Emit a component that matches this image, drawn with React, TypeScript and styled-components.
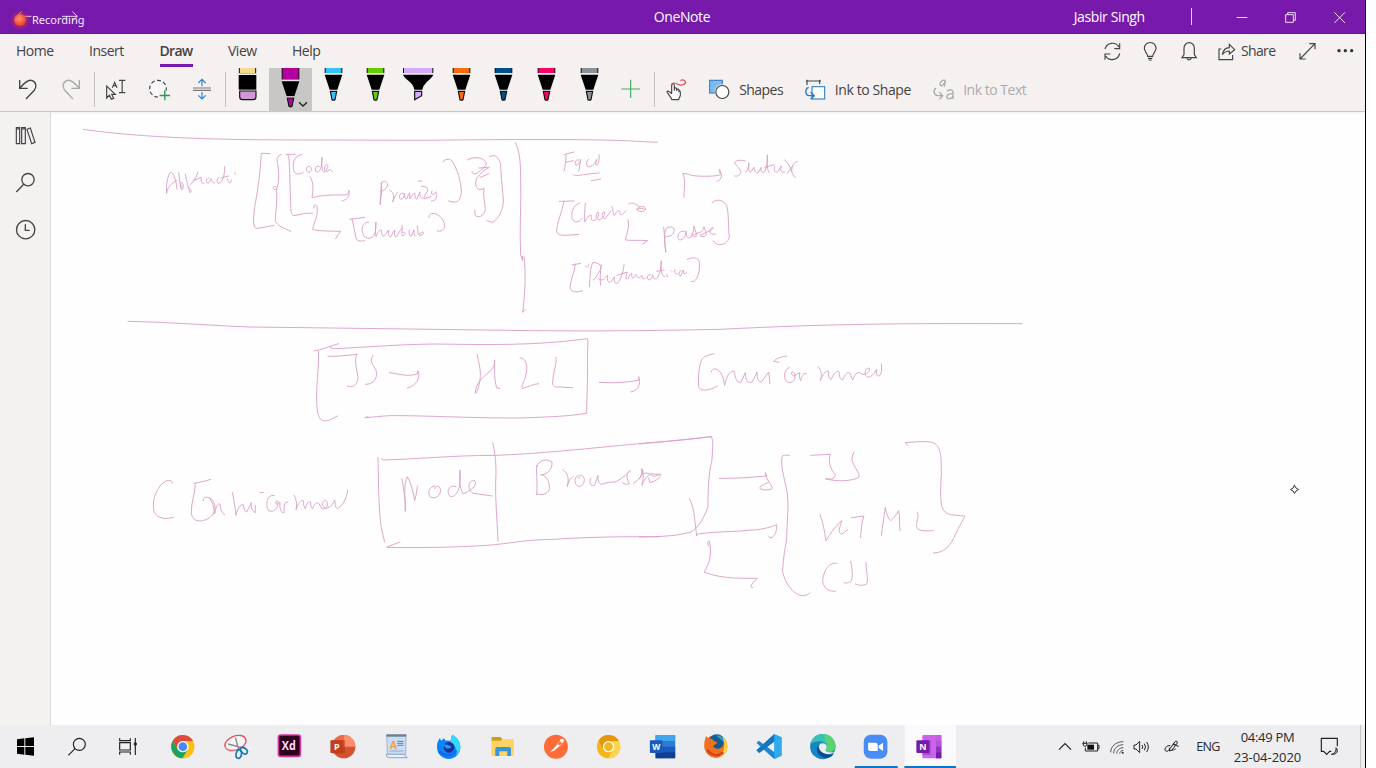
import React from "react";
import styled, { createGlobalStyle } from "styled-components";

const GlobalStyle = createGlobalStyle`
  * { box-sizing: border-box; }
  body { margin: 0; background: #fff; overflow: hidden; }
`;

const Screen = styled.div`
  width: 1366px;
  height: 768px;
  display: flex;
  flex-direction: column;
  border-right: 1px solid #000;
  background: #fff;
  color: #454242;
  font: 14px/18px "Open Sans", "Noto Sans", sans-serif;
`;

/* ---------- title bar ---------- */

const TitleBar = styled.header`
  position: relative;
  height: 34px;
  flex: none;
  display: grid;
  grid-template-columns: 1fr auto 1fr;
  align-items: center;
  background: #7719aa;
  border-bottom: 1px solid #6b0f9f;
  color: #fff;
`;

const NavArrows = styled.svg`
  width: 90px;
  height: 33px;
  display: block;
`;

const AppName = styled.span`
  letter-spacing: -0.4px;
  margin-right: 1px;
`;

const TitleRight = styled.div`
  display: flex;
  justify-content: flex-end;
  align-items: center;
`;

const UserName = styled.span`
  width: 117px;
  letter-spacing: -0.38px;
  white-space: nowrap;
`;

const TitleDivider = styled.span`
  width: 1px;
  height: 17px;
  background: #e7c9f5;
  margin-right: 25px;
`;

const RecordingBadge = styled.div`
  position: absolute;
  left: 12px;
  top: 11px;
  display: flex;
  align-items: center;
  gap: 4px;
  font: 11px/18px "Noto Sans", "Open Sans", sans-serif;
  color: #f6eafa;
`;

const RecordDot = styled.span`
  width: 12px;
  height: 12px;
  margin: 0 2px;
  border-radius: 50%;
  background: radial-gradient(circle at 45% 40%, #ff9a7c, #f4492f 60%, #cf3a35);
  box-shadow: 0 0 4px 1px #c2304e;
`;

/* ---------- ribbon ---------- */

const Ribbon = styled.div`
  height: 78px;
  flex: none;
  background: #f5f1f1;
  border-bottom: 1px solid #c9c6c6;
`;

const TabRow = styled.nav`
  height: 34px;
  display: flex;
  align-items: stretch;
  padding-left: 16px;
`;

const Tab = styled.span<{ $w: number; $active?: boolean }>`
  width: ${(p) => p.$w}px;
  line-height: 34px;
  letter-spacing: ${(p) => (p.$active ? "-0.7px" : "-0.5px")};
  font-weight: ${(p) => (p.$active ? 600 : 400)};

  span {
    display: inline-block;
    height: 33px;
    min-width: 33px;
    border-bottom: ${(p) => (p.$active ? "3px solid #7719aa" : "none")};
  }
`;

const TabActions = styled.div`
  margin-left: auto;
  display: flex;
`;

const ShareLabel = styled.span`
  width: 45px;
  line-height: 34px;
  letter-spacing: -0.65px;
`;

const ToolRow = styled.div`
  height: 43px;
  display: flex;
  align-items: stretch;
`;

const Separator = styled.i`
  width: 1px;
  height: 35px;
  margin: 4px 0;
  background: #c4c0c0;
`;

const Pens = styled.div`
  display: flex;
  margin-left: 0.4px;
`;

const PenSlot = styled.div<{ $active?: boolean }>`
  width: 42.65px;
  height: 43px;
  background: ${(p) => (p.$active ? "#c9c6c6" : "transparent")};
`;

const ToolLabel = styled.span<{ $w: number; $disabled?: boolean; $ls?: number }>`
  width: ${(p) => p.$w}px;
  line-height: 43px;
  white-space: nowrap;
  letter-spacing: ${(p) => p.$ls ?? 0}px;
  color: ${(p) => (p.$disabled ? "#aeabab" : "inherit")};
`;

/* ---------- body ---------- */

const Body = styled.div`
  flex: 1;
  min-height: 0;
  display: flex;
`;

const Sidebar = styled.aside`
  width: 51px;
  flex: none;
  display: flex;
  flex-direction: column;
  background: #f4f1f1;
  border-right: 1px solid #dcdada;
`;

const Page = styled.main`
  flex: 1;
  background: linear-gradient(#f3f3f3, #fefefe 3px);
`;

const InkCanvas = styled.svg`
  display: block;
  width: 1314px;
  height: 613px;
  fill: none;
  stroke: #dd9fc8;
  stroke-linecap: round;
  stroke-linejoin: round;
`;

const InkStroke = styled.path`
  stroke-width: 2.8;
`;

/* ---------- taskbar ---------- */

const Taskbar = styled.footer`
  height: 43px;
  flex: none;
  display: flex;
  background: #eeedef;
`;

const Launcher = styled.div<{ $w: number }>`
  width: ${(p) => p.$w}px;
  flex: none;
  height: 43px;
`;

const Tray = styled.div`
  margin-left: auto;
  display: flex;
  font-size: 13px;
  color: #2a2a2a;
`;

const Language = styled.span`
  width: 44px;
  text-align: center;
  font-size: 12.5px;
  line-height: 44px;
  letter-spacing: -0.6px;
`;

const Clock = styled.div`
  width: 75px;
  display: flex;
  flex-direction: column;
  align-items: center;
  padding-top: 2px;
  line-height: 20px;
  white-space: nowrap;
`;

const ClockLine = styled.span<{ $ls: number }>`
  letter-spacing: ${(p) => p.$ls}px;
`;

const ShowDesktop = styled.div`
  width: 5px;
  margin-left: 7px;
  border-left: 1px solid #c4c4c6;
`;

/* Icons are drawn on a grid of three units per pixel. */
const IconSvg = styled.svg<{ $color: string; $weight: number }>`
  display: block;
  flex: none;
  overflow: visible;
  fill: none;
  stroke: ${(p) => p.$color};
  stroke-width: ${(p) => p.$weight};
`;

type IconProps = { box: [number, number, number, number]; color?: string; weight?: number; children: React.ReactNode };

const Icon = ({ box, color = "#444", weight = 3.5, children }: IconProps) => (
  <IconSvg viewBox={box.join(" ")} width={box[2] / 3} height={box[3] / 3} $color={color} $weight={weight}>
    {children}
  </IconSvg>
);

const Letter = styled.text<{ $size: number; $fill: string }>`
  font: 700 ${(p) => p.$size}px "Open Sans", sans-serif;
  fill: ${(p) => p.$fill};
  stroke: none;
  text-anchor: middle;
`;

/* ---------- pens ---------- */

type PenKind = "eraser" | "pen" | "marker";
const pens: { kind: PenKind; color: string; active?: boolean }[] = [
  { kind: "eraser", color: "#f5dc8c" },
  { kind: "pen", color: "#b4009e", active: true },
  { kind: "pen", color: "#33c3fc" },
  { kind: "pen", color: "#66cc00" },
  { kind: "marker", color: "#d3aaff" },
  { kind: "pen", color: "#ff6a0d" },
  { kind: "pen", color: "#004f8b" },
  { kind: "pen", color: "#ff0066" },
  { kind: "pen", color: "#8a9297" },
];

const Pen = ({ kind, color, active }: (typeof pens)[number]) => (
  <Icon box={[0, 0, 128, 129]} color="none">
    {kind === "eraser" && (
      <>
        <path d="M40 0V17H89V0" fill={color} stroke="#111" strokeWidth="3" />
        <rect x="38" y="16" width="53" height="4" fill="#fff" />
        <rect x="38" y="21" width="53" height="44" fill="#000" />
        <path d="M41 69H90V86Q90 95 81 95H50Q41 95 41 86Z" fill="#cf97d4" stroke="#111" strokeWidth="3.5" />
      </>
    )}
    {kind === "pen" && (
      <g transform={active ? "translate(0 20)" : undefined}>
        <rect x="38" y={active ? -20 : 0} width="53" height={active ? 35 : 15} fill="#111" />
        <rect x="41" y={active ? -20 : 0} width="47" height={active ? 34 : 15} fill={color} />
        <path d="M38 15H91V18.500H38Z" fill="#e9e9e9" />
        <path d="M38 20H91L76 65H53Z" fill="#000" />
        <path d="M53 66H76V69H53Z" fill="#fff" />
        <path d="M55 70H74L69 95Q64.500 98 60 95Z" fill={color} stroke="#111" strokeWidth="3.5" />
        {active && <path d="M90 83L102 94L114 83" stroke="#222" strokeWidth="4" />}
      </g>
    )}
    {kind === "marker" && (
      <>
        <rect x="18" y="0" width="91" height="15" fill="#111" />
        <rect x="21" y="0" width="85" height="15" fill={color} />
        <path d="M18 15H109V18.500H18Z" fill="#e9e9e9" />
        <path d="M18 20H109Q106 28 90 41Q78 52 76 65H52Q50 51 36 40Q20 27 18 20Z" fill="#000" />
        <path d="M53 70H74V83L53 95Z" fill={color} stroke="#111" strokeWidth="3.5" />
      </>
    )}
  </Icon>
);

/* ---------- handwriting ---------- */

/* Ink strokes grouped by page area; each area has its own origin. */
const inkAreas: { x: number; y: number; strokes: string[] }[] = [
  {
    x: 0,
    y: 112,
    strokes: [
      "M250 52C330 64 440 73 560 78S800 84 990 84L1260 85C1500 82 1700 82 1800 84S1920 89 1972 91",
      "M384 628C540 632 620 640 750 645C1000 648 1300 652 1600 656C1850 658 2000 655 2160 652C2500 635 2700 634 3067 635",
      "M500 243C497 225 503 190 511 181C522 178 530 215 531 231M500 243C502 225 514 215 530 205M536 182C540 205 540 225 545 234C551 228 552 214 545 211C540 212 542 222 546 226M556 186C560 210 566 230 570 242C577 240 572 226 564 226M570 218C583 208 588 196 594 180M579 206L604 196C602 210 606 216 612 214M628 198C618 198 616 212 624 214C632 210 632 198 634 200C634 208 638 214 644 212M656 196C649 200 649 214 657 214C667 210 674 195 674 164M662 198L686 192M682 200C684 208 686 214 692 212C694 208 694 204 694 204M705 182L706 186",
    ],
  },
  {
    x: 240,
    y: 130,
    strokes: [
      "M90 71L64 70C62 120 52 190 44 230C40 265 38 290 48 295C65 294 80 290 102 286",
      "M124 74C112 76 108 84 113 100C117 125 118 150 112 172C108 182 98 180 100 173C103 165 112 170 110 182C112 220 106 250 106 272C112 288 130 294 152 304",
      "M166 73L138 73L146 76C150 120 150 180 152 220C152 245 154 256 162 257C180 253 195 248 218 250",
      "M185 73C166 78 158 90 160 116C162 134 176 136 190 127M204 109C196 113 197 127 207 127C217 123 217 110 206 109M238 110C226 104 222 120 230 126C240 128 246 112 246 82C244 105 246 122 252 127C262 120 268 106 260 103C252 108 250 126 262 124L270 118L278 126",
      "M210 140C218 152 222 170 216 203C240 196 280 194 314 195C326 194 329 186 326 180C330 198 322 209 306 213",
      "M222 234C220 222 228 220 231 232C236 255 222 275 218 298C230 303 260 303 302 304C296 312 291 318 287 326",
      "M424 158C424 180 420 210 420 224C424 200 426 175 424 158C436 148 446 158 442 168C438 178 428 184 422 184M448 180C464 188 462 204 458 216C464 200 468 192 474 186M490 190C480 186 474 202 482 208C490 208 494 198 493 190C493 200 495 207 500 207C504 198 506 190 510 188C510 196 508 204 510 207C516 194 521 188 525 190C524 200 525 205 530 208L540 186M534 154C538 151 542 155 546 153M540 188C540 198 540 204 548 205M544 170C556 166 566 174 562 184C556 194 550 202 552 206L572 200M576 182C572 190 576 196 582 193C588 186 588 182 588 188C594 200 588 214 574 213",
      "M608 95C620 84 632 86 638 96C652 120 662 150 664 180C664 205 656 217 642 216L625 213",
      "M682 90C700 78 728 82 738 96C742 112 720 120 716 126C704 136 696 132 696 124M716 114L744 112M720 142C732 138 742 134 748 130M748 112C734 118 720 132 712 142C704 156 706 174 716 178C724 180 730 176 732 174C728 200 736 220 736 236C736 254 716 268 706 256L704 240",
      "M748 80C768 70 780 84 782 110C784 150 788 180 790 210C790 240 776 266 758 277L740 272",
      "M826 38C838 60 842 90 842 150C844 230 838 300 842 375L848 392L847 379M852 380C858 430 856 480 848 547L856 538",
      "M330 268L374 262M336 266C342 290 345 310 348 324C350 334 360 334 374 332M386 276C370 276 364 292 367 306C372 324 384 330 396 322C406 314 408 300 408 276C406 298 406 312 408 320C412 308 420 298 424 300C424 312 426 318 432 319L446 300C444 312 446 322 452 320L464 300C462 314 464 322 470 320L484 296M486 286C488 304 484 312 488 318C500 314 496 304 490 308M508 300C506 312 508 320 514 318L522 300C522 312 522 318 526 318M532 288C536 300 530 312 538 316C552 316 554 308 548 306L538 312",
      "M568 263C562 252 576 248 588 252C604 260 612 272 614 288C614 300 602 306 592 303",
    ],
  },
  {
    x: 530,
    y: 130,
    strokes: [
      "M102 74L132 66M108 76C108 92 106 108 102 122M106 97L130 92M146 90C134 86 132 104 140 106C150 102 152 92 152 88C148 100 150 116 146 124M176 88C166 94 168 114 180 110C192 106 198 98 200 88C196 102 196 108 202 104C208 96 208 84 207 74",
      "M130 134C136 142 154 132 208 129M184 152C192 150 202 150 212 147",
      "M462 202C462 176 466 154 461 134L457 131C470 128 480 138 500 138C530 140 566 138 571 134L568 118C576 134 580 146 561 154",
      "M646 93C632 88 614 92 614 98C618 108 634 118 632 128C628 138 620 140 614 138M648 126C654 118 656 106 657 98C656 116 656 130 662 126L672 112C674 122 678 132 684 128L694 112C690 122 696 132 704 126C710 112 714 90 712 74C712 100 710 120 718 128M704 112L732 104M734 110C730 124 736 130 744 124L754 108C750 120 752 130 764 126M764 90C776 98 782 114 784 124M802 94C786 96 776 130 796 142M772 130L788 108",
      "M88 214L132 213M102 214C98 240 80 280 80 304C82 320 106 316 146 313",
      "M148 220C128 226 124 246 126 264C132 282 148 276 156 266M166 220C164 246 162 266 164 276C170 262 180 254 184 256C182 266 184 272 192 272C204 264 210 252 204 246C196 250 196 270 208 270C222 262 228 250 222 244C214 250 216 268 226 266L242 244M246 230C250 246 250 258 254 256C260 244 264 240 270 244C268 252 272 258 278 252L288 242M296 222C308 214 320 224 328 230M320 238C324 228 346 226 347 237C344 248 322 246 320 238C330 234 340 234 344 238",
      "M294 270C300 296 288 312 287 330C306 332 330 330 353 332L338 343",
      "M401 292C404 320 404 350 408 367C402 330 402 304 410 294C428 286 438 296 430 310C424 318 412 322 404 320M462 304C446 300 438 322 448 330C462 330 468 316 468 302C468 318 472 326 480 324C488 310 492 302 492 288C496 304 502 312 498 320C492 322 488 318 486 316L512 306C520 300 522 294 522 290C526 306 532 312 526 318C518 322 514 320 510 316L540 302C552 296 552 290 544 294C536 300 538 318 556 312",
      "M546 218C560 206 578 208 590 226C598 260 594 300 598 320C594 340 578 346 562 343C554 340 552 334 550 332",
      "M126 405L152 400M136 402C134 430 120 450 120 474C124 488 144 488 158 482",
      "M166 408C172 416 174 410 176 402M178 470C180 440 182 410 188 398C208 396 220 410 208 424C202 436 196 446 190 450M214 404C210 430 210 450 212 466M206 446C216 456 226 446 232 436C230 452 236 462 244 454L254 440C250 456 256 464 264 458C272 446 280 430 282 404M262 436L292 426C288 438 286 446 290 448M294 446C298 436 302 430 306 430C304 440 306 446 310 444L318 434C320 442 326 448 336 436C336 446 340 450 346 444M362 434C350 432 348 448 358 450C366 446 368 438 368 434C370 446 374 450 382 444C390 430 394 412 394 392C392 420 394 440 404 440M380 424L402 420M410 434L412 440M424 422L426 424M434 418C434 430 436 438 444 430M454 420C446 426 444 438 452 438L460 420C460 430 462 436 470 428",
      "M472 388C490 380 506 382 508 398C510 424 504 448 490 455L484 454",
    ],
  },
  {
    x: 300,
    y: 320,
    strokes: [
      "M116 71C96 76 64 90 42 93M55 93C58 130 50 180 50 230C50 260 52 288 62 298C80 310 96 296 112 288",
      "M90 82L100 86C200 82 280 74 400 72C560 74 700 78 862 56C866 66 862 90 862 120C864 180 860 240 860 280C800 290 720 292 650 294C500 294 360 286 270 287C240 288 220 292 194 293L204 290",
      "M84 109C110 110 140 106 172 103C162 110 168 140 174 170C174 194 160 206 142 198M220 106C206 120 218 134 228 150C234 174 222 194 196 193M268 158C290 160 320 172 352 162L354 152C362 174 350 196 322 205",
      "M532 104C536 130 544 150 540 180C536 204 530 220 526 220C526 190 546 176 562 160C576 150 584 140 584 120C584 150 582 180 590 204L600 205M660 114C674 112 682 128 680 150C678 180 660 200 668 206C682 200 700 192 716 191M768 112C772 130 758 156 758 194C764 206 780 198 792 202L818 203",
      "M898 187C940 190 980 188 1018 180L1016 170C1022 190 1018 212 992 216",
      "M234 412C236 460 234 520 240 590C242 620 250 650 254 666M244 416L250 420C340 418 460 406 586 406C760 400 980 372 1080 366L1236 350",
      "M578 368C584 390 588 420 588 460C584 530 592 600 594 664",
      "M300 666C290 670 272 676 260 682C340 684 480 682 560 676C640 670 660 660 760 658C880 650 980 650 1080 650",
      "M306 476C312 510 316 540 316 574C318 540 308 500 322 470C334 490 340 520 344 542C350 520 352 502 352 498M404 498C386 500 382 520 392 532C412 538 426 520 420 504C414 496 406 496 404 506M468 500C446 490 436 520 452 530C476 530 484 490 480 450C476 490 482 512 490 522C510 512 534 498 524 482C504 478 500 512 520 520C540 522 560 526 576 528",
      "M710 436C708 460 714 500 710 524M710 440C716 420 740 414 756 426C758 450 740 464 722 464C740 466 750 484 748 508C742 524 724 526 712 522M788 448C804 460 808 474 802 500C804 484 812 474 820 468M834 466C820 474 822 496 838 500C854 494 858 476 846 466C838 464 834 470 838 476M872 474C866 490 872 500 884 496L894 466C892 488 900 498 914 490C930 484 940 490 954 482C970 470 984 462 990 452C974 462 982 480 988 490C980 496 974 492 968 488M1000 490C1018 480 1028 464 1028 448C1032 470 1028 482 1026 496C1032 478 1042 468 1052 462C1056 476 1076 464 1082 462",
    ],
  },
  {
    x: 130,
    y: 430,
    strokes: [
      "M128 160C126 148 110 146 92 166C74 188 66 216 72 244C82 268 108 268 130 262",
      "M242 148C226 154 210 156 192 160M196 160C196 190 182 220 184 252C190 276 214 280 240 262C262 244 258 216 240 204C226 198 216 204 220 212M240 206C250 220 252 236 254 252C256 234 264 218 270 222C272 240 276 250 284 254",
      "M307 187C312 210 316 236 318 256C322 236 332 222 340 224C342 236 344 246 350 246L364 218C362 234 368 246 376 248L376 226M390 188L400 187M432 196C412 192 404 226 416 242C432 250 446 232 444 214C436 210 434 220 442 224C450 218 450 212 450 220C448 236 454 250 462 248C464 230 458 216 474 216",
      "M492 196C502 212 500 228 498 240C504 220 514 208 520 212C520 224 522 232 526 236C530 220 536 212 542 216C542 228 544 234 548 236C554 220 560 216 566 220L576 236C594 240 598 214 584 210C572 218 576 236 592 234C604 230 612 218 614 210C616 222 616 234 622 236C636 228 650 210 653 180",
    ],
  },
  {
    x: 640,
    y: 340,
    strokes: [
      "M222 41C204 46 192 48 184 60C176 86 174 110 176 140C180 156 210 152 232 138M214 96C216 82 230 84 242 98C252 110 250 124 254 136C258 112 268 90 284 94C284 112 290 128 302 128L316 98C316 120 324 132 336 126L352 96C350 116 354 126 364 126L386 96L390 130M440 48C424 50 408 56 401 64L416 67M448 82C430 88 428 122 446 128C466 128 470 106 460 96C452 94 452 104 462 108L480 98C476 108 480 118 482 122C486 104 492 96 500 102",
      "M534 80C544 92 548 104 540 122C548 104 558 90 566 94C564 108 568 118 574 118C582 98 592 90 598 96C596 108 602 120 608 120C616 100 622 94 630 100L638 120C648 98 654 92 664 102C676 108 694 94 688 84C674 84 668 108 686 112C700 108 706 92 710 88C706 104 714 112 720 106C726 98 726 84 724 72",
      "M4 386C8 398 4 412 -2 416M6 404C16 396 20 400 32 402L60 403C66 410 44 426 30 428L26 414",
      "M-2 312C70 304 130 302 210 290C222 292 218 320 216 360C206 400 204 440 204 500C190 540 170 570 150 577C100 590 50 590 -2 591",
      "M238 415C290 416 330 412 380 408L376 398C378 420 398 436 396 446C390 452 366 450 360 446C358 438 372 432 384 428",
      "M148 476C162 500 164 536 170 588L172 582C230 574 280 576 340 570C370 568 390 562 410 554C410 570 408 590 390 594L386 588",
      "M206 618C200 610 204 600 208 604C216 640 210 670 192 696C230 712 280 716 352 715C342 726 332 734 332 740L338 743",
      "M448 346C436 344 428 346 426 350C422 380 432 410 438 440C450 490 440 540 440 600C430 650 428 680 428 696C436 732 460 760 480 766C496 768 504 766 510 758",
      "M512 346L572 343C562 360 572 390 586 404C584 420 570 418 556 416C590 426 636 424 656 412C664 400 634 376 636 352L642 336",
      "M540 524C550 546 554 580 558 602C572 580 584 560 606 542C598 564 592 580 606 582L622 570M634 533L672 528C664 545 664 570 662 592M724 586C728 556 732 530 736 502C740 526 748 540 752 542C762 534 770 522 776 512C780 530 778 556 780 572M832 516C840 526 824 552 832 566C846 576 862 572 880 572",
      "M590 670C564 664 548 700 548 726C554 750 570 754 586 754M632 664C638 690 638 712 634 722C626 730 618 730 612 728M678 668C678 690 686 720 680 732C668 738 656 736 646 732",
      "M802 316L796 308C820 306 860 302 880 308C904 320 904 350 904 400C902 440 900 480 906 500C916 530 940 524 974 528C970 540 956 560 946 584C930 620 914 638 880 639",
    ],
  },
];

const slotX = (i: number) => 466.5 + i * 160.1;

/* Application icon in a taskbar cell; coordinates run across the whole bar. */
const TaskIcon = ({ index, shift = 0, children }: { index: number; shift?: number; children: React.ReactNode }) => (
  <Launcher $w={53.367}>
    <Icon box={[slotX(index) - shift, 30, 160.1, 129]} color="none">
      {children}
    </Icon>
  </Launcher>
);

const TaskbarApps = () => (
  <>
    <TaskIcon index={0}>
      <circle cx="547" cy="95" r="35" fill="#fbc116" />
      <path d="M547 78H578A35 35 0 0 0 516.700 77.500L532 104Z" fill="#dd4b3e" />
      <path d="M516.700 77.500A35 35 0 0 0 546 130L562 103L547 95L532 104Z" fill="#1da15f" />
      <circle cx="547" cy="95" r="17" fill="#fff" />
      <circle cx="547" cy="95" r="13" fill="#4688f4" />
    </TaskIcon>
    <TaskIcon index={1}>
      <ellipse cx="706" cy="84" rx="33" ry="21" fill="#f8f4f5" stroke="#e2555f" strokeWidth="4" transform="rotate(-22 706 84)" />
      <path d="M676 98C690 108 714 106 730 96" stroke="#efb5b8" strokeWidth="3" />
      <path d="M706 68L716 106M684 87L736 101" stroke="#888" strokeWidth="4" />
      <ellipse cx="716" cy="117" rx="8" ry="13" stroke="#1679b8" strokeWidth="5" transform="rotate(12 716 117)" />
      <ellipse cx="731" cy="107" rx="8" ry="12" stroke="#1679b8" strokeWidth="5" transform="rotate(-48 731 107)" />
    </TaskIcon>
    <TaskIcon index={2}>
      <rect x="836" y="60" width="66" height="64" rx="7" fill="#2e001f" stroke="#d6389d" strokeWidth="5" />
      <Letter x="867" y="104" $size={35} $fill="#ffd9f2" textLength="42" lengthAdjust="spacingAndGlyphs">Xd</Letter>
    </TaskIcon>
    <TaskIcon index={3}>
      <circle cx="1030" cy="95" r="35" fill="#d35230" />
      <path d="M1030 60A35 35 0 0 1 1065 95H1030Z" fill="#ff8f6b" />
      <path d="M1030 60A35 35 0 0 0 995 95H1030Z" fill="#ed6c47" />
      <path d="M1030 75H1034V116H996V75Z" fill="#a83a1c" opacity=".5" />
      <rect x="990" y="76" width="38" height="38" rx="3" fill="#c43e1c" />
      <Letter x="1009" y="105" $size={27} $fill="#fff">P</Letter>
    </TaskIcon>
    <TaskIcon index={4}>
      <path d="M1160 60H1218L1217 118H1162Z" fill="#c9def2" stroke="#7b9cc4" strokeWidth="2" />
      <rect x="1159" y="58" width="60" height="7" fill="#6c7f93" />
      <path d="M1158 118H1210L1222 128H1170Q1158 128 1158 118Z" fill="#e9f1fa" stroke="#8ba9cc" strokeWidth="3" />
      <Letter x="1180" y="101" $size={32} $fill="#f0a24a">A</Letter>
      <path d="M1192 79H1210M1192 85H1210M1192 91H1210" stroke="#5482bd" strokeWidth="3" />
      <path d="M1168 108H1210" stroke="#89aeda" strokeWidth="3" />
    </TaskIcon>
    <TaskIcon index={5}>
      <path d="M1358 59C1376 70 1382 82 1382 97A35 35 0 0 1 1312 97C1311 86 1316 76 1320 70L1325 77L1333 70L1338 77C1344 76 1348 76 1352 78C1356 72 1353 66 1358 59Z" fill="#0a84ff" />
      <path d="M1358 59C1376 70 1382 82 1382 97C1382 108 1376 116 1370 121C1374 104 1366 90 1352 82C1356 73 1353 66 1358 59Z" fill="#35d8fb" />
      <circle cx="1348" cy="97" r="16" fill="#20308f" />
      <path d="M1332 90C1340 86 1349 92 1356 95C1350 103 1342 101 1338 99Z" fill="#149ffa" />
      <path d="M1318 108C1334 126 1358 122 1370 107" stroke="#1668e4" strokeWidth="8" />
    </TaskIcon>
    <TaskIcon index={6} shift={1380}>
      <path d="M94 66H121L126 72H160V122H94Z" fill="#ffd667" />
      <path d="M94 66H121L126 72L122 77H94Z" fill="#d39c12" />
      <path d="M94 78H160V122H94Z" fill="#fcd462" />
      <path d="M105 123V101Q105 96 110 96H147Q152 96 152 101V123H141V109H117V123Z" fill="#3895d8" />
    </TaskIcon>
    <TaskIcon index={7} shift={1380}>
      <circle cx="288" cy="95" r="36" fill="#ff6c37" />
      <path d="M269 113L294 87L300 92L281 108Z" fill="#fff" />
      <path d="M290 88L300 80L306 86L299 94" stroke="#ffd3c3" strokeWidth="2" />
      <circle cx="306" cy="77" r="6" fill="#fff" />
      <path d="M269 113L281 109M298 86L304 79" stroke="#ff6c37" strokeWidth="2" />
    </TaskIcon>
    <TaskIcon index={8} shift={1380}>
      <circle cx="447" cy="95" r="35" fill="#f7c325" />
      <path d="M447 78H478A35 35 0 0 0 416.700 77.500L432 104Z" fill="#e8950c" />
      <path d="M417 78A35 35 0 0 0 446 130L462 103L432 104Z" fill="#f5b51b" />
      <path d="M478 78A35 35 0 0 1 446 130L463 103L460 80Z" fill="#fad552" />
      <circle cx="447" cy="95" r="15" fill="#f3b51f" stroke="#fff" strokeWidth="4" />
    </TaskIcon>
    <TaskIcon index={9} shift={1380}>
      <rect x="586" y="60" width="59" height="70" rx="3" fill="#2b7cd3" />
      <rect x="586" y="60" width="59" height="18" fill="#41a5ee" />
      <rect x="586" y="95" width="59" height="18" fill="#185abd" />
      <rect x="586" y="112" width="59" height="18" rx="2" fill="#103f91" />
      <rect x="569" y="76" width="38" height="38" rx="3" fill="#185abd" />
      <Letter x="588" y="104" $size={25} $fill="#fff">W</Letter>
    </TaskIcon>
    <TaskIcon index={10} shift={1380}>
      <circle cx="768" cy="94" r="34" fill="#e8601c" />
      <circle cx="771" cy="83" r="25" fill="#155b93" />
      <path d="M768 61C786 60 798 74 798 90L786 76Z" fill="#33a0cf" />
      <path d="M736 72C736 66 740 64 740 64L746 71C754 69 760 73 762 78L772 82C770 88 764 89 760 92C762 100 774 104 784 98C792 93 794 78 789 68C801 76 806 94 800 108C790 128 766 133 750 122C735 112 730 90 736 72Z" fill="#ee7320" />
      <path d="M789 68C801 76 806 94 800 108C794 118 786 124 778 126C794 110 798 90 789 68Z" fill="#ffd43a" />
      <path d="M742 105C758 124 778 124 790 112" stroke="#d5401d" strokeWidth="7" />
    </TaskIcon>
    <TaskIcon index={11} shift={1380}>
      <path d="M944 58L966 67V122L944 132L891 84L898 77L947 113V77L898 113L891 106Z" fill="#1c86cf" />
      <path d="M944 58L966 67V122L944 132Z" fill="#2fa9ef" />
      <path d="M891 106L944 58V80L900 114Z" fill="#1576bd" />
    </TaskIcon>
    <TaskIcon index={12} shift={1380}>
      <circle cx="1088" cy="95" r="38" fill="#1684c5" />
      <path d="M1051 87C1056 66 1072 57 1090 57C1112 58 1126 76 1126 94C1126 110 1110 114 1098 109C1091 105 1100 104 1100 94C1098 78 1070 72 1051 87Z" fill="#36c2b6" />
      <path d="M1090 57C1112 58 1126 76 1126 94C1126 110 1110 114 1098 109C1091 105 1104 102 1102 90Z" fill="#5bd36e" />
      <path d="M1073 92C1064 112 1082 132 1106 128C1112 126 1118 122 1121 118C1100 124 1078 112 1073 92Z" fill="#0b4c91" />
      <path d="M1100 94C1098 86 1088 82 1080 86C1074 95 1076 106 1090 114C1100 119 1114 118 1123 110C1114 113 1102 113 1097 108C1094 104 1100 104 1100 94Z" fill="#eeedef" />
      <path d="M1123 110L1121 119L1130 120V106Z" fill="#eeedef" />
    </TaskIcon>
    <TaskIcon index={13} shift={1380}>
      <rect x="1212" y="59" width="71" height="72" rx="21" fill="#4a8cf7" />
      <path d="M1225 83H1246Q1254 83 1254 91V108H1233Q1225 108 1225 100ZM1257 92L1270 83V108L1257 99Z" fill="#fff" />
      <rect x="1185" y="153" width="129" height="6" fill="#0f74cc" />
    </TaskIcon>
    <TaskIcon index={14} shift={1380}>
      <rect x="1333" y="30" width="154" height="129" fill="#fafafc" />
      <rect x="1386" y="60" width="57" height="70" rx="3" fill="#ca64ea" />
      <rect x="1427" y="60" width="16" height="36" fill="#c45fe5" />
      <rect x="1427" y="78" width="16" height="18" fill="#b653dc" />
      <rect x="1427" y="95" width="16" height="18" fill="#9332bf" />
      <rect x="1427" y="112" width="16" height="18" fill="#7719aa" />
      <rect x="1386" y="76" width="25" height="44" fill="#80389e" opacity=".45" />
      <rect x="1368" y="76" width="39" height="38" rx="3" fill="#7719aa" />
      <Letter x="1388" y="105" $size={27} $fill="#fff">N</Letter>
      <rect x="1332" y="153" width="155" height="6" fill="#0f74cc" />
    </TaskIcon>
  </>
);

export default function App() {
  return (
    <>
      <GlobalStyle />
      <Screen>
        <TitleBar>
          <NavArrows viewBox="0 0 270 99" fill="none" stroke="#e8cdf4" strokeWidth="3">
            <path d="M94 49H51M64 35L50 49L64 63M186 49H232M217 35L232 49L217 63" />
          </NavArrows>
          <AppName>OneNote</AppName>
          <TitleRight>
            <UserName>Jasbir Singh</UserName>
            <TitleDivider />
            <Icon box={[1070, 0, 148, 99]} color="#f0dcf8" weight={3}>
              <path d="M1129 52.500H1161" />
            </Icon>
            <Icon box={[1218, 0, 147, 99]} color="#f0dcf8" weight={3}>
              <path d="M1277 44H1300V67H1277ZM1283 44V38H1306V61H1300" />
            </Icon>
            <Icon box={[1365, 0, 150, 99]} color="#f0dcf8" weight={3}>
              <path d="M1423 37L1455 69M1455 37L1423 69" />
            </Icon>
          </TitleRight>
          <RecordingBadge>
            <RecordDot />
            Recording
          </RecordingBadge>
        </TitleBar>

        <Ribbon>
          <TabRow>
            <Tab $w={73}><span>Home</span></Tab>
            <Tab $w={70.500}><span>Insert</span></Tab>
            <Tab $w={68.500} $active><span>Draw</span></Tab>
            <Tab $w={64}><span>View</span></Tab>
            <Tab $w={60}><span>Help</span></Tab>
            <TabActions>
              <Icon box={[703, 102, 111, 102]}>
                <path d="M736 147A23 23 0 0 1 778 141M780 130V146H764M780 160A23 23 0 0 1 738 168M736 179V162H752" />
              </Icon>
              <Icon box={[814, 102, 114, 102]}>
                <path d="M864 169C864 159 854 156 854 145A17.500 17.500 0 0 1 889 145C889 156 879 159 879 169ZM865 175H878M867 180H876" />
              </Icon>
              <Icon box={[928, 102, 120, 102]}>
                <path d="M967 173H1010L1004 164V144A15.500 16 0 0 0 973 144V164ZM982 175Q988 184 995 175" />
              </Icon>
              <Icon box={[1048, 102, 95, 102]}>
                <path d="M1085 147H1078V179H1119V165M1088 164C1091 148 1101 143 1109 143V133L1125 149L1109 162V153C1099 153 1094 156 1088 164Z" />
              </Icon>
              <ShareLabel>Share</ShareLabel>
              <Icon box={[1278, 102, 120, 102]}>
                <path d="M1320 177L1365 131M1348 131H1365V148M1320 160V177H1337" />
              </Icon>
              <Icon box={[1398, 102, 117, 102]} color="none">
                <g fill="#333">
                  <circle cx="1437" cy="152" r="5" />
                  <circle cx="1456" cy="152" r="5" />
                  <circle cx="1475" cy="152" r="5" />
                </g>
              </Icon>
            </TabActions>
          </TabRow>

          <ToolRow>
            <Icon box={[0, 204, 147, 129]} weight={4}>
              <path d="M59 240V265H83M60 264C74 247 84 239 94 241C108 244 112 259 103 271L78 297" />
            </Icon>
            <Icon box={[147, 204, 135, 129]} color="#aaa" weight={4}>
              <path d="M238 240V265H214M237 264C223 247 213 239 203 241C189 244 185 259 194 271L219 297" />
            </Icon>
            <Separator />
            <Icon box={[285, 204, 129, 129]}>
              <path d="M320 258V294L328 286L334 298L341 295L335 283H346ZM357 241H376M366.500 241V278M357 278H376M337 263L344 247L351 263M340 257H349" />
            </Icon>
            <Icon box={[414, 204, 129, 129]}>
              <circle cx="474" cy="266" r="25" strokeDasharray="12 7" fill="#fbf9f9" />
              <path d="M474 272H512V302H474Z" fill="#f5f1f1" stroke="none" />
              <path d="M479 286.500H510M494.500 271V301" stroke="#2f9550" strokeWidth="4" />
            </Icon>
            <Icon box={[543, 204, 132, 129]}>
              <path d="M579 264H633M579 271H633" stroke="#777" />
              <path d="M606 259V239M595 249L606 238L617 249M606 276V296M595 286L606 297L617 286" stroke="#3183ca" />
            </Icon>
            <Separator />
            <Pens>
              {pens.map((pen, i) => (
                <PenSlot key={i} $active={pen.active}>
                  <Pen {...pen} />
                </PenSlot>
              ))}
            </Pens>
            <Icon box={[540, 204, 132, 129]} color="#43a868" weight={3.5}>
              <path d="M574 267H630M602 239V294" />
            </Icon>
            <Separator />
            <Icon box={[675, 204, 135, 129]}>
              <path d="M725 280V257Q725 251 729 251Q733 251 733 257V272V265Q738 261 740 267V272Q744 264 747 270V274Q750 271 751 277V285C751 291 746 294 746 299H726C722 290 712 280 711 275C713 271 721 275 725 282" fill="#fff" />
              <path d="M724 254C728 246 737 249 744 253C755 259 769 252 766 244C762 238 751 239 753 243" stroke="#e04450" />
            </Icon>
            <Icon box={[810, 204, 117, 129]}>
              <rect x="839" y="241" width="38" height="38" fill="#7ebcf0" stroke="#3f7fc0" />
              <circle cx="877" cy="276" r="23" fill="#f5f1f1" stroke="none" />
              <circle cx="877" cy="276" r="19.500" fill="#fff" />
            </Icon>
            <ToolLabel $w={58.300} $ls={-0.55}>Shapes</ToolLabel>
            <Icon box={[1102, 204, 112, 129]}>
              <path d="M1129 243H1174M1132 239V255M1170 239V252" />
              <rect x="1147" y="260" width="38" height="37" fill="#fff" stroke="#3685c8" />
              <path d="M1137 262C1125 266 1126 287 1139 287H1152M1143 277L1154 287L1143 298" stroke="#2478c4" strokeWidth="4" />
            </Icon>
            <ToolLabel $w={90.700} $ls={-0.4}>Ink to Shape</ToolLabel>
            <Icon box={[196, 204, 113, 129]} color="#aaa" weight={4}>
              <path d="M257 241C248 238 240 246 241 254C246 262 254 253 257 241L254 260M229 264C220 271 222 286 235 287H248M239 277L249 287L239 298M262 274C270 266 280 269 280 277V297M280 281C267 281 261 285 261 291C264 299 274 298 280 290" />
            </Icon>
            <ToolLabel $w={80} $disabled $ls={-0.48}>Ink to Text</ToolLabel>
          </ToolRow>
        </Ribbon>

        <Body>
          <Sidebar>
            <Icon box={[0, 0, 150, 141]}>
              <path d="M49 47H59V95H49ZM65 47H76V95H65ZM81 52L91 48L105 91L95 95ZM49 51H59M65 51H76" />
            </Icon>
            <Icon box={[0, 141, 150, 141]} weight={4}>
              <circle cx="84" cy="203" r="18.500" />
              <path d="M71 217L49 240" />
            </Icon>
            <Icon box={[0, 282, 150, 141]} weight={4}>
              <circle cx="77" cy="353" r="27.500" />
              <path d="M76 337V355H89" />
            </Icon>
          </Sidebar>
          <Page>
            <InkCanvas viewBox="51 112 1314 613">
              {inkAreas.map((area, i) => (
                <g key={i} transform={`translate(${area.x} ${area.y}) scale(0.33333)`}>
                  {area.strokes.map((d, j) => (
                    <InkStroke key={j} d={d} />
                  ))}
                </g>
              ))}
              <path
                d="M1294.500 485.500L1296 488L1298.500 489.500L1296 491L1294.500 493.500L1293 491L1290.500 489.500L1293 488Z"
                stroke="#333"
                strokeWidth="1"
              />
            </InkCanvas>
          </Page>
        </Body>

        <Taskbar>
          <Launcher $w={51}>
            <Icon box={[0, 30, 153, 129]} color="none">
              <path d="M51 73L73 70V93H51ZM76 70L102 67V93H76ZM51 96H73V119L51 116ZM76 96H102V122L76 119Z" fill="#000" />
            </Icon>
          </Launcher>
          <Launcher $w={51}>
            <Icon box={[153, 30, 153, 129]} color="#222">
              <circle cx="238" cy="88" r="18" />
              <path d="M225 101L205 121" />
            </Icon>
          </Launcher>
          <Launcher $w={53.500}>
            <Icon box={[306, 30, 160.5, 129]} color="#222">
              <path d="M359 70V77H391V70M359 83H391V105H359ZM359 119V111H391V119M406 69V120" />
              <circle cx="406" cy="87" r="5" fill="#222" stroke="none" />
            </Icon>
          </Launcher>
          <TaskbarApps />
          <Tray>
            <Icon box={[153, 30, 78, 129]} color="#222">
              <path d="M177 104L195 86L213 104" />
            </Icon>
            <Icon box={[231, 30, 81, 129]} color="#222" weight={3}>
              <path d="M265 84H293V108H256V98M293 91H297V101H293M251 79V84M259 79V84M247 85H263M249 86Q249 94 255 94Q261 94 261 86" />
              <rect x="262" y="89" width="20" height="15" fill="#111" stroke="none" />
            </Icon>
            <Icon box={[312, 30, 75, 129]} color="#555" weight={3}>
              <path d="M332 112C332 94 348 80 370 80M341 115C341 100 354 89 370 89M350 116C350 106 359 98 370 98M359 116C360 110 365 106 370 106" />
              <circle cx="368" cy="113" r="3" fill="#222" stroke="none" />
            </Icon>
            <Icon box={[387, 30, 78, 129]} color="#222" weight={3}>
              <path d="M402 90H408L419 79V113L408 102H402ZM426 90Q431 96 426 102M433 86Q440 96 433 106M440 81Q450 96 440 111" />
            </Icon>
            <Icon box={[465, 30, 93, 129]} color="#222" weight={3}>
              <path d="M510 101L526 79Q532 76 532 84L516 105L508 108ZM521 86L528 91M511 92C500 90 492 101 496 107C503 113 511 101 508 98M517 107C522 105 524 101 527 102M518 88L536 94" />
            </Icon>
            <Language>ENG</Language>
            <Clock>
              <ClockLine $ls={-0.3}>04:49 PM</ClockLine>
              <ClockLine $ls={-0.05}>23-04-2020</ClockLine>
            </Clock>
            <Icon box={[915, 30, 144, 129]} color="#222">
              <path d="M994 109H989L980 118L971 109H964V70H1012V94" />
              <path d="M1008 98C1018 107 1009 121 994 118C1004 116 1009 108 1008 98Z" fill="#999" strokeWidth="2.500" />
            </Icon>
            <ShowDesktop />
          </Tray>
        </Taskbar>
      </Screen>
    </>
  );
}
